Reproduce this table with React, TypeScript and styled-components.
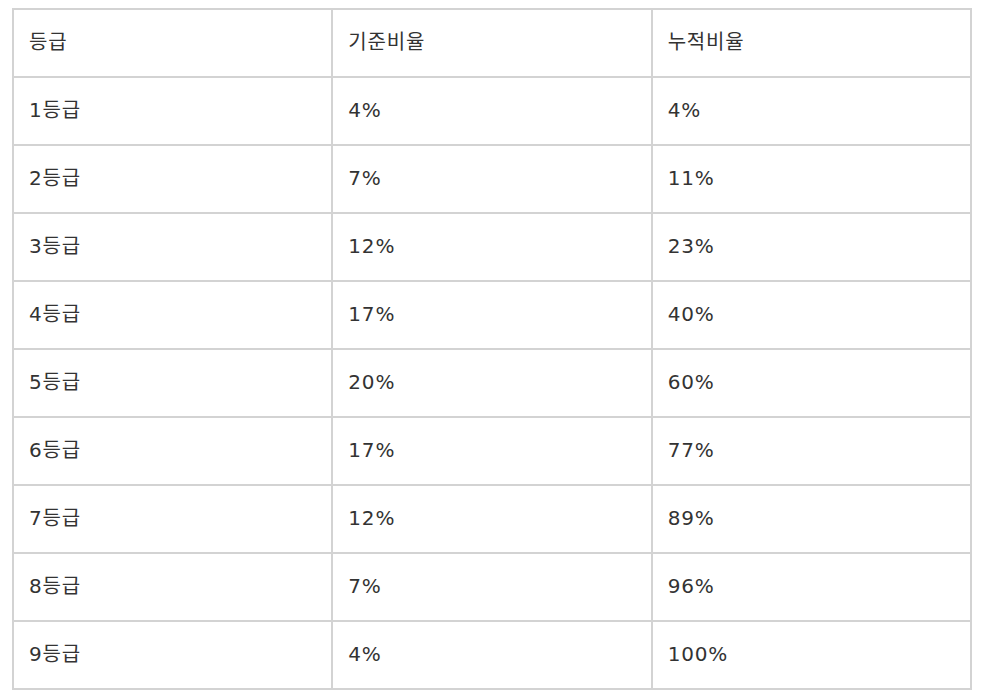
import styled, { createGlobalStyle } from 'styled-components';

const rows: [string, string, string][] = [
  ['1등급', '4%', '4%'],
  ['2등급', '7%', '11%'],
  ['3등급', '12%', '23%'],
  ['4등급', '17%', '40%'],
  ['5등급', '20%', '60%'],
  ['6등급', '17%', '77%'],
  ['7등급', '12%', '89%'],
  ['8등급', '7%', '96%'],
  ['9등급', '4%', '100%'],
];

const GlobalStyle = createGlobalStyle`
  body {
    margin: 0;
    background: #fff;
    font-family: "DejaVu Sans", "Noto Sans CJK KR", sans-serif;
  }
`;

export default function App(): JSX.Element {
  return (
    <>
      <GlobalStyle />
      <Page>
        <GradeTable>
          <thead>
            <tr>
              <Cell as="th">등급</Cell>
              <Cell as="th">기준비율</Cell>
              <Cell as="th">누적비율</Cell>
            </tr>
          </thead>
          <tbody>
            {rows.map(([grade, base, total]) => (
              <tr key={grade}>
                <Cell>{grade}</Cell>
                <Cell>{base}</Cell>
                <Cell>{total}</Cell>
              </tr>
            ))}
          </tbody>
        </GradeTable>
      </Page>
    </>
  );
}

const Page = styled.div`
  padding: 8px 0 0 12px;
`;
const GradeTable = styled.table`
  width: 960px;
  border-collapse: collapse;
  table-layout: fixed;
  border: 2px solid #d3d3d3;
`;
const Cell = styled.td`
  height: 68px;
  padding: 0 15px 3px;
  border: 2px solid #d3d3d3;
  box-sizing: border-box;
  text-align: left;
  vertical-align: middle;
  font-size: 20px;
  font-weight: 400;
  color: #333;
  line-height: 1;
  letter-spacing: 0.8px;
`;
